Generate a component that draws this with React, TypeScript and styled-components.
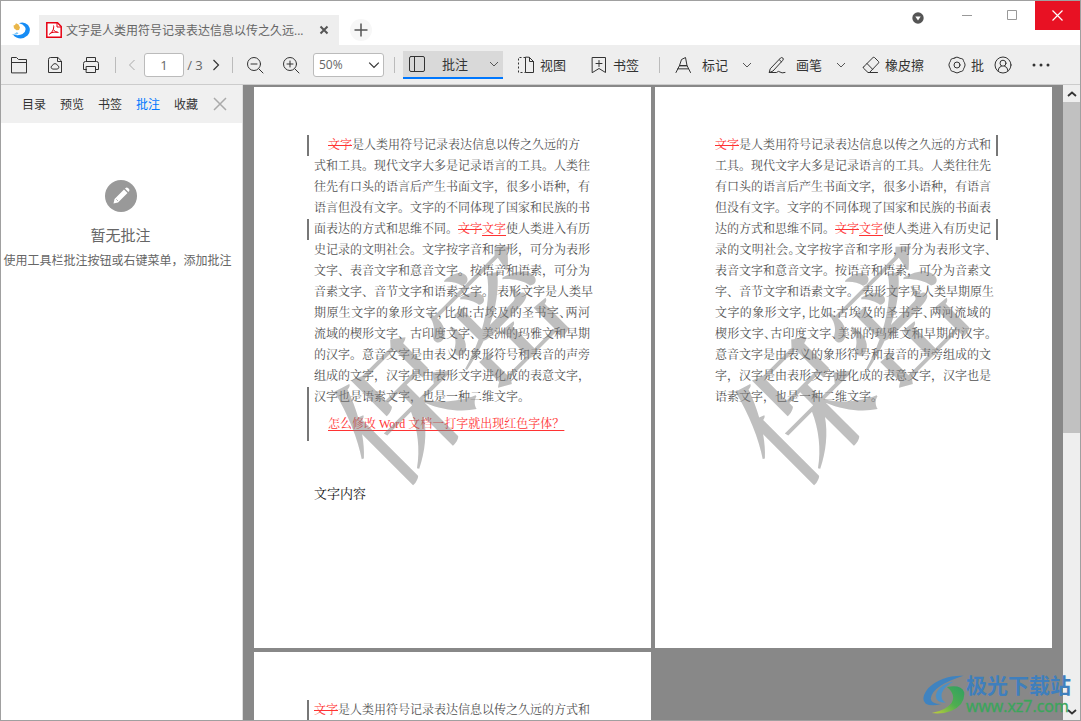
import React from "react";
import styled, { createGlobalStyle, css } from "styled-components";

const uiFont = `"Open Sans", "Noto Sans CJK SC", sans-serif`;
const docFont = `"Liberation Serif", "Noto Serif CJK SC", "Noto Sans CJK SC", serif`;

const GlobalStyle = createGlobalStyle`
  * { box-sizing: border-box; }
  body { margin: 0; background: #fff; font-family: ${uiFont}; }
  button, input, select { font: inherit; color: inherit; }
  button { border: 0; padding: 0; background: none; cursor: pointer; }
  p, h2 { margin: 0; font-weight: 400; }
`;

const Window = styled.div`
  position: relative;
  display: flex;
  flex-direction: column;
  height: 100vh;
  border: 1px solid #a0a0a0;
  overflow: hidden;
`;

/* ---------- title bar ---------- */

const TitleBar = styled.header`
  display: flex;
  align-items: flex-end;
  height: 44px;
  flex: none;
  background: #fff;
`;

const Logo = styled.span`
  display: flex;
  width: 38px;
  height: 30px;
  align-items: center;
  padding-left: 10px;
`;

const DocTab = styled.div`
  display: flex;
  align-items: center;
  width: 300px;
  height: 30px;
  padding: 0 8px 0 7px;
  background: #eee;
  color: #666;
  font-size: 12px;
`;

const TabTitle = styled.span`
  flex: 1;
  margin-left: 4px;
  white-space: nowrap;
`;

const SmallButton = styled.button`
  display: flex;
  align-items: center;
  justify-content: center;
  width: 15px;
  height: 20px;
`;

const AddButton = styled.button`
  display: flex;
  align-items: center;
  justify-content: center;
  width: 22px;
  height: 22px;
  margin: 0 0 4px 11px;
  border-radius: 50%;
  background: #f7f7f7;
`;

const WindowButtons = styled.div`
  display: flex;
  align-self: flex-start;
  margin-left: auto;
`;

const WindowButton = styled.button<{ $danger?: boolean; $wide?: boolean }>`
  display: flex;
  align-items: center;
  justify-content: center;
  width: ${(p) => (p.$wide ? 54 : 45)}px;
  height: ${(p) => (p.$wide ? 34 : 29)}px;
  background: ${(p) => (p.$danger ? "#e81123" : "transparent")};
`;

/* ---------- toolbar ---------- */

const Toolbar = styled.div`
  display: flex;
  align-items: center;
  flex: none;
  height: 40px;
  background: #eee;
  border-bottom: 1px solid #ccc;
  color: #333;
  font-size: 13px;
  white-space: nowrap;
`;

const IconButton = styled.button<{ $narrow?: boolean }>`
  display: flex;
  align-items: center;
  justify-content: center;
  width: ${(p) => (p.$narrow ? 20 : 36)}px;
  height: 30px;
  flex: none;
`;

const Divider = styled.span<{ $before: number; $after: number }>`
  flex: none;
  width: 1px;
  height: 16px;
  margin: 0 ${(p) => p.$after}px 0 ${(p) => p.$before}px;
  background: #bbb;
`;

const PageInput = styled.input`
  width: 40px;
  height: 24px;
  margin-left: 2px;
  padding: 0;
  border: 1px solid #bbb;
  border-radius: 3px;
  background: #fff;
  color: #666;
  text-align: center;
`;

const PageCount = styled.span`
  width: 22px;
  text-align: center;
  color: #666;
`;

const ZoomBox = styled.label`
  position: relative;
  display: flex;
  align-items: center;
  margin-left: 4px;
  svg {
    position: absolute;
    right: 4px;
    pointer-events: none;
  }
`;

const ZoomSelect = styled.select`
  appearance: none;
  width: 71px;
  height: 24px;
  padding: 0 5px;
  border: 1px solid #bbb;
  border-radius: 3px;
  background: #fff;
  color: #666;
  font-size: 12px;
`;

const ToolButton = styled.button<{ $before?: number; $gap?: number }>`
  display: flex;
  align-items: center;
  flex: none;
  height: 28px;
  gap: ${(p) => p.$gap ?? 5}px;
  margin-left: ${(p) => p.$before ?? 0}px;
`;

const ActiveTool = styled(ToolButton)`
  width: 100px;
  padding: 0 4px 0 5px;
  background: #d9d9d9;
  border-bottom: 2px solid #0078ff;
  svg:last-child {
    margin-left: auto;
  }
`;

/* ---------- body ---------- */

const Body = styled.div`
  display: flex;
  flex: 1;
  min-height: 0;
`;

const Sidebar = styled.aside`
  width: 242px;
  flex: none;
  border-right: 1px solid #ddd;
  background: #fff;
`;

const SideTabs = styled.nav`
  display: flex;
  align-items: center;
  height: 38px;
  gap: 14px;
  padding-left: 21px;
  background: #f0f0f0;
  font-size: 12px;
`;

const SideTab = styled.button<{ $active?: boolean }>`
  height: 24px;
  color: ${(p) => (p.$active ? "#0078ff" : "#333")};
`;

const EmptyState = styled.section`
  display: flex;
  flex-direction: column;
  align-items: center;
  padding: 57px 2px 0 0;
  color: #666;
  white-space: nowrap;
`;

const EmptyTitle = styled.h2`
  margin-top: 12px;
  font-size: 15px;
  line-height: 22px;
`;

const EmptyHint = styled.p`
  margin-top: 5px;
  padding-right: 6px;
  font-size: 12px;
  line-height: 20px;
`;

const Viewer = styled.main`
  display: grid;
  flex: 1;
  min-width: 0;
  grid-template-columns: 1fr 1fr;
  grid-auto-rows: max-content;
  align-content: start;
  gap: 4px;
  padding: 2px 11px 0;
  overflow: hidden;
  background: #888;
`;

const Sheet = styled.article`
  position: relative;
  aspect-ratio: 397 / 561;
  padding: 48px 60px;
  background: #fff;
  color: #505050;
  font-family: ${docFont};
  font-size: 12px;
  line-height: 21px;
`;

const bar = css<{ $bar?: "left" | "right" }>`
  position: relative;
  ${(p) =>
    p.$bar &&
    css`
      &::before {
        content: "";
        position: absolute;
        top: 0;
        bottom: 0;
        ${p.$bar}: -7px;
        width: 2px;
        background: #777;
      }
    `}
`;

const TextColumn = styled.div`
  width: 276px;
`;

const TextLine = styled.p<{ $bar?: "left" | "right"; $full?: boolean; $indent?: boolean; $tight?: boolean }>`
  ${bar}
  white-space: nowrap;
  padding-left: ${(p) => (p.$indent ? 14 : 0)}px;
  text-align-last: ${(p) => (p.$full ? "justify" : "left")};
  font-feature-settings: ${(p) => (p.$tight ? `"halt"` : "normal")};
`;

const ChangedBlock = styled.div<{ $bar?: "left" | "right" }>`
  ${bar}
  padding-bottom: 6px;
`;

const Deleted = styled.del`
  color: #f33;
`;

const Inserted = styled.ins`
  color: #f33;
  text-underline-offset: 2px;
`;

const RedLine = styled.p`
  margin-top: 6px;
  padding-left: 14px;
  white-space: nowrap;
`;

const ContentTitle = styled.p`
  margin-top: 42px;
  color: #111;
  font-size: 13px;
`;

const Stamp = styled.div`
  position: absolute;
  inset: 0;
  display: flex;
  align-items: center;
  justify-content: center;
  pointer-events: none;
  color: rgba(128, 128, 128, 0.5);
  font-size: 132px;
  font-weight: 500;
  line-height: 1;
  white-space: nowrap;
  span {
    transform: rotate(-45deg);
  }
`;

const Scrollbar = styled.div`
  display: flex;
  flex-direction: column;
  flex: none;
  width: 17px;
  background: #eee;
`;

const ScrollArrow = styled.button`
  display: flex;
  align-items: center;
  justify-content: center;
  height: 17px;
  flex: none;
`;

const ScrollTrack = styled.div`
  flex: 1;
`;

const ScrollThumb = styled.div`
  height: 55%;
  background: #c1c1c1;
`;

const SiteMark = styled.div`
  position: absolute;
  right: 9px;
  bottom: 4px;
  display: flex;
  align-items: center;
  gap: 1px;
  pointer-events: none;
`;

const SiteName = styled.div`
  color: #3f7fbd;
  font: 700 21px/24px "Noto Sans CJK SC", sans-serif;
  white-space: nowrap;
`;

const SiteUrl = styled.div`
  color: #3ba55b;
  font: 400 16px/20px "Open Sans", sans-serif;
  -webkit-text-stroke: 0.4px #3ba55b;
`;

/* ---------- icons ---------- */

const Line = ({ size = 18, color = "#333", width = 1, children }: {
  size?: number; color?: string; width?: number; children: React.ReactNode;
}) => (
  <svg width={size} height={size} viewBox="0 0 18 18" fill="none" stroke={color}
    strokeWidth={width} strokeLinejoin="round" strokeLinecap="round" aria-hidden="true">
    {children}
  </svg>
);

const Chevron = ({ color = "#555", size = 10 }: { color?: string; size?: number }) => (
  <svg width={size} height={size} viewBox="0 0 10 10" fill="none" stroke={color} aria-hidden="true">
    <path d="M1 3l4 4 4-4" />
  </svg>
);

const FolderIcon = () => (
  <Line><path d="M1.500 16.500v-15h5l2 2h8v13zM1.500 6.500h15" /></Line>
);
const CloudDocIcon = () => (
  <Line>
    <path d="M11.500 1.500h-7q-2 0-2 2v13h13v-11zM11.500 1.500v4h4" />
    <path d="M6.500 13a1.800 1.800 0 0 1 0-3.500 2.600 2.600 0 0 1 5 0 1.800 1.800 0 0 1 0 3.500z" />
  </Line>
);
const PrintIcon = () => (
  <Line>
    <path d="M4.500 5.500v-4h9v4M4.500 13.500h-3v-6q0-2 2-2h11q2 0 2 2v6h-3" />
    <path d="M4.500 10.500h9v6h-9z" />
  </Line>
);
const ZoomIcon = ({ plus }: { plus?: boolean }) => (
  <Line>
    <circle cx="8" cy="8" r="6.500" />
    <path d="M13 13l4 4M5 8h6" />
    {plus && <path d="M8 5v6" />}
  </Line>
);
const PanelIcon = () => (
  <Line><rect x="1.500" y="1.500" width="15" height="15" rx="1.500" /><path d="M6.500 1.500v15" /></Line>
);
const ViewIcon = () => (
  <Line>
    <path d="M8.500 1.500h-7v15h7" strokeDasharray="2 2" strokeLinecap="butt" />
    <path d="M8.500 1.500v15h8v-11l-4-4zM12.500 1.500v4h4" />
  </Line>
);
const BookmarkIcon = () => (
  <Line><path d="M2.500 1.500h13v15L9 12.500l-6.500 4zM9 4.500v6M6 7.500h6" /></Line>
);
const MarkIcon = () => (
  <Line>
    <path d="M5.500 9.500l2-6 4-2 1.500 8zM4 12.500l1.500-3H13l1.500 3zM4 12.500l-2 4M14.500 12.500l2 4" />
  </Line>
);
const PenIcon = () => (
  <Line>
    <path d="M2.500 12.500L12.500 2q1.200-1 2.300 0t0 2.300L5 15l-3.500 1.500zM11.500 4l2 1.800" />
    <path d="M1.500 16.500h7q2-2 3.500-.5t5 .5" />
  </Line>
);
const EraserIcon = () => (
  <Line>
    <path d="M1.500 11L11 1.500q.7-.5 1.500 0l4 4q.6.800 0 1.500L7.500 16.500H6L1.500 12.200q-.5-.6 0-1.200zM5 7.500l5.500 5.700M7 16.500h8.500" />
  </Line>
);
const GearIcon = () => (
  <Line>
    <path d="M7 1.800Q9 .3 11 1.800q1 .8 2.200.7 2 0 2.300 2.200.2 1.200 1 2 1.200 2.300 0 4.400-.8 1-1 2.200-.4 2-2.300 2.200-1.200 0-2.200.8-2 1.300-4 0-1-.8-2.200-.8-2-.2-2.300-2.200-.2-1.200-1-2.200-1.200-2.100 0-4.400.8-.8 1-2 .4-2.200 2.300-2.200Q6 2.600 7 1.800z" />
    <circle cx="9" cy="9" r="3" />
  </Line>
);
const PersonIcon = () => (
  <Line>
    <circle cx="9" cy="9" r="8" /><circle cx="9" cy="7.200" r="3" />
    <path d="M4 14.800q.3-4 3.500-4.800M14 14.800q-.3-4-3.500-4.800" />
  </Line>
);

const AppLogo = () => (
  <svg width="20" height="20" viewBox="0 0 20 20" aria-hidden="true">
    <path d="M8 3.200Q13 1 17 5q4 5.500-.5 10.500-5 4.500-11 2-2.500-1-3.500-3 6 1.500 9.500-.5 4.500-3 2.500-7Q12 4 8 3.200z" fill="#168cf5" />
    <path d="M2.500 5.500l1.500-.5 1-1.800 2.500 1.300 1.500 3-1 2.500-2.500.3-2.500-2z" fill="#e9b64a" />
    <path d="M.5 14.500q3.500-.5 5.500-2.500l1.500 1.800Q4 15.500.5 14.500z" fill="#7cc4f5" />
  </svg>
);
const PdfIcon = () => (
  <svg width="16" height="16" viewBox="0 0 16 16" fill="none" stroke="#e60012" aria-hidden="true">
    <path d="M.8.8h10.700l3.700 3.700v10.700H.8z" fill="#fff" strokeWidth="1.500" /><path d="M11 1v4h4" />
    <path d="M3 12.500q3-1.500 4.300-5 .8-3.500.2-4M7.300 7.500q1.500 2.800 5.200 3M4.500 11q3.500-1.300 7-.8" />
  </svg>
);

/* ---------- document text ---------- */

type Row = { text: React.ReactNode; bar?: "left" | "right"; full?: boolean; indent?: boolean; tight?: boolean };

const edit = <><Deleted>文字</Deleted><Inserted>文字</Inserted></>;

const firstPage: Row[] = [
  { text: <><Deleted>文字</Deleted>是人类用符号记录表达信息以传之久远的方</>, bar: "left", indent: true },
  { text: "式和工具。现代文字大多是记录语言的工具。人类往" },
  { text: "往先有口头的语言后产生书面文字，很多小语种，有" },
  { text: "语言但没有文字。文字的不同体现了国家和民族的书" },
  { text: <>面表达的方式和思维不同。{edit}使人类进入有历</>, bar: "left" },
  { text: "史记录的文明社会。文字按字音和字形，可分为表形" },
  { text: "文字、表音文字和意音文字。按语音和语素，可分为" },
  { text: "音素文字、音节文字和语素文字。 表形文字是人类早" },
  { text: "期原生文字的象形文字，比如:古埃及的圣书字、两河", full: true, tight: true },
  { text: "流域的楔形文字、古印度文字、美洲的玛雅文和早期" },
  { text: "的汉字。意音文字是由表义的象形符号和表音的声旁" },
  { text: "组成的文字，汉字是由表形文字进化成的表意文字，" },
];

const secondPage: Row[] = [
  { text: <><Deleted>文字</Deleted>是人类用符号记录表达信息以传之久远的方式和</>, bar: "right" },
  { text: "工具。现代文字大多是记录语言的工具。人类往往先" },
  { text: "有口头的语言后产生书面文字，很多小语种，有语言" },
  { text: "但没有文字。文字的不同体现了国家和民族的书面表" },
  { text: <>达的方式和思维不同。{edit}使人类进入有历史记</>, bar: "right" },
  { text: "录的文明社会。文字按字音和字形，可分为表形文字、", full: true, tight: true },
  { text: "表音文字和意音文字。按语音和语素，可分为音素文" },
  { text: "字、音节文字和语素文字。 表形文字是人类早期原生" },
  { text: "文字的象形文字，比如:古埃及的圣书字、两河流域的", full: true, tight: true },
  { text: "楔形文字、古印度文字、美洲的玛雅文和早期的汉字。", full: true, tight: true },
  { text: "意音文字是由表义的象形符号和表音的声旁组成的文" },
  { text: "字，汉字是由表形文字进化成的表意文字，汉字也是" },
  { text: "语素文字，也是一种二维文字。" },
];

const thirdPage: Row[] = [
  { text: <><Deleted>文字</Deleted>是人类用符号记录表达信息以传之久远的方式和</>, bar: "left" },
];

const Rows = ({ rows }: { rows: Row[] }) => (
  <>
    {rows.map((r, i) => (
      <TextLine key={i} $bar={r.bar} $full={r.full} $indent={r.indent} $tight={r.tight}>{r.text}</TextLine>
    ))}
  </>
);

export default function App() {
  return (
    <Window>
      <GlobalStyle />
      <TitleBar>
        <Logo><AppLogo /></Logo>
        <DocTab>
          <PdfIcon />
          <TabTitle>文字是人类用符号记录表达信息以传之久远...</TabTitle>
          <SmallButton aria-label="关闭标签">
            <svg width="10" height="10" viewBox="0 0 10 10" stroke="#555" strokeWidth="2"><path d="M1.500 1.500l7 7M8.500 1.500l-7 7" /></svg>
          </SmallButton>
        </DocTab>
        <AddButton aria-label="新建标签">
          <svg width="14" height="14" viewBox="0 0 14 14" stroke="#555" strokeWidth="1.500"><path d="M7 .5v13M.5 7h13" /></svg>
        </AddButton>
        <WindowButtons>
          <WindowButton $wide aria-label="菜单">
            <svg width="12" height="12" viewBox="0 0 12 12"><circle cx="6" cy="6" r="5.700" fill="#555" /><path d="M3.300 4.500h5.400L6 8.500z" fill="#fff" /></svg>
          </WindowButton>
          <WindowButton aria-label="最小化">
            <svg width="12" height="12" viewBox="0 0 12 12" stroke="#999"><path d="M0 5.500h10" /></svg>
          </WindowButton>
          <WindowButton aria-label="最大化">
            <svg width="12" height="12" viewBox="0 0 12 12" stroke="#999" fill="none"><path d="M.5.500h9v9h-9z" /></svg>
          </WindowButton>
          <WindowButton $danger aria-label="关闭">
            <svg width="12" height="12" viewBox="0 0 12 12" stroke="#fff" strokeWidth="1.200"><path d="M.5.500l10 10M10.500.500l-10 10" /></svg>
          </WindowButton>
        </WindowButtons>
      </TitleBar>

      <Toolbar>
        <IconButton aria-label="打开"><FolderIcon /></IconButton>
        <IconButton aria-label="云文档"><CloudDocIcon /></IconButton>
        <IconButton aria-label="打印"><PrintIcon /></IconButton>
        <Divider $before={6} $after={6} />
        <IconButton $narrow aria-label="上一页">
          <svg width="8" height="12" viewBox="0 0 8 12" fill="none" stroke="#aaa"><path d="M6.500 1l-5 5 5 5" /></svg>
        </IconButton>
        <PageInput aria-label="页码" defaultValue="1" />
        <PageCount>/ 3</PageCount>
        <IconButton $narrow aria-label="下一页">
          <svg width="8" height="12" viewBox="0 0 8 12" fill="none" stroke="#333" strokeWidth="1.200"><path d="M1.500 1l5 5-5 5" /></svg>
        </IconButton>
        <Divider $before={6} $after={4} />
        <IconButton aria-label="缩小"><ZoomIcon /></IconButton>
        <IconButton aria-label="放大"><ZoomIcon plus /></IconButton>
        <ZoomBox>
          <ZoomSelect aria-label="缩放比例" defaultValue="50%"><option>50%</option></ZoomSelect>
          <Chevron color="#333" size={12} />
        </ZoomBox>
        <Divider $before={10} $after={8} />
        <ActiveTool $gap={16}><PanelIcon />批注<Chevron /></ActiveTool>
        <ToolButton $before={14}><ViewIcon />视图</ToolButton>
        <ToolButton $before={24}><BookmarkIcon />书签</ToolButton>
        <Divider $before={20} $after={14} />
        <ToolButton $gap={10}><MarkIcon />标记</ToolButton>
        <ToolButton $before={14} aria-label="标记选项"><Chevron /></ToolButton>
        <ToolButton $before={16} $gap={10}><PenIcon />画笔</ToolButton>
        <ToolButton $before={14} aria-label="画笔选项"><Chevron /></ToolButton>
        <ToolButton $before={16}><EraserIcon />橡皮擦</ToolButton>
        <ToolButton $before={24}><GearIcon />批</ToolButton>
        <ToolButton $before={10} aria-label="账户"><PersonIcon /></ToolButton>
        <ToolButton $before={20} aria-label="更多">
          <svg width="18" height="4" viewBox="0 0 18 4" fill="#333"><circle cx="2" cy="2" r="1.500" /><circle cx="9" cy="2" r="1.500" /><circle cx="16" cy="2" r="1.500" /></svg>
        </ToolButton>
      </Toolbar>

      <Body>
        <Sidebar>
          <SideTabs>
            <SideTab>目录</SideTab>
            <SideTab>预览</SideTab>
            <SideTab>书签</SideTab>
            <SideTab $active>批注</SideTab>
            <SideTab>收藏</SideTab>
            <SmallButton aria-label="关闭侧栏">
              <svg width="14" height="14" viewBox="0 0 14 14" stroke="#aaa" strokeWidth="1.500"><path d="M1 1l12 12M13 1L1 13" /></svg>
            </SmallButton>
          </SideTabs>
          <EmptyState>
            <svg width="32" height="32" viewBox="0 0 32 32" aria-hidden="true">
              <circle cx="16" cy="16" r="16" fill="#999" />
              <path d="M8.500 23.500l1-4.500 9.500-9.500 3.500 3.500-9.500 9.500zM20 8.500l1-.8q1-.6 2 .2l1 1q.9 1 .2 2l-.8 1z" fill="#fff" />
              <path d="M11.500 19.500l1.200 1.200" stroke="#999" />
            </svg>
            <EmptyTitle>暂无批注</EmptyTitle>
            <EmptyHint>使用工具栏批注按钮或右键菜单，添加批注</EmptyHint>
          </EmptyState>
        </Sidebar>

        <Viewer>
          <Sheet>
            <TextColumn>
              <Rows rows={firstPage} />
              <ChangedBlock $bar="left">
                <TextLine>汉字也是语素文字，也是一种二维文字。</TextLine>
                <RedLine><Inserted>怎么修改 Word 文档一打字就出现红色字体？</Inserted></RedLine>
              </ChangedBlock>
              <ContentTitle>文字内容</ContentTitle>
            </TextColumn>
            <Stamp><span>保密</span></Stamp>
          </Sheet>
          <Sheet>
            <TextColumn><Rows rows={secondPage} /></TextColumn>
            <Stamp><span>保密</span></Stamp>
          </Sheet>
          <Sheet>
            <TextColumn><Rows rows={thirdPage} /></TextColumn>
          </Sheet>
        </Viewer>

        <Scrollbar>
          <ScrollArrow aria-label="向上滚动">
            <svg width="10" height="6" viewBox="0 0 10 6" fill="none" stroke="#333" strokeWidth="1.800"><path d="M1 5l4-3.500L9 5" /></svg>
          </ScrollArrow>
          <ScrollTrack><ScrollThumb /></ScrollTrack>
          <ScrollArrow aria-label="向下滚动">
            <svg width="10" height="6" viewBox="0 0 10 6" fill="none" stroke="#333" strokeWidth="1.800"><path d="M1 1l4 3.500L9 1" /></svg>
          </ScrollArrow>
        </Scrollbar>
      </Body>

      <SiteMark>
        <svg width="42" height="39" viewBox="20 20 126 118" aria-hidden="true">
          <defs>
            <linearGradient id="swirl" x1="0" y1="1" x2="1" y2="0">
              <stop offset="0" stopColor="#c5cf3a" /><stop offset="0.5" stopColor="#4fae50" /><stop offset="1" stopColor="#2f9f62" />
            </linearGradient>
          </defs>
          <path d="M142 22Q75 20 35 60 10 92 28 107q15 9 47 1-32-1-32-18Q48 52 142 22z" fill="#3f83c0" />
          <path d="M112 40Q64 52 58 82q0 22 30 22-16-10-12-28 6-20 36-36z" fill="#4a90c8" />
          <path d="M92 56q44-8 52 16 4 38-38 56-30 12-60 7 42-7 60-30 14-26-14-49z" fill="url(#swirl)" />
        </svg>
        <div>
          <SiteName>极光下载站</SiteName>
          <SiteUrl>www.xz7.com</SiteUrl>
        </div>
      </SiteMark>
    </Window>
  );
}
